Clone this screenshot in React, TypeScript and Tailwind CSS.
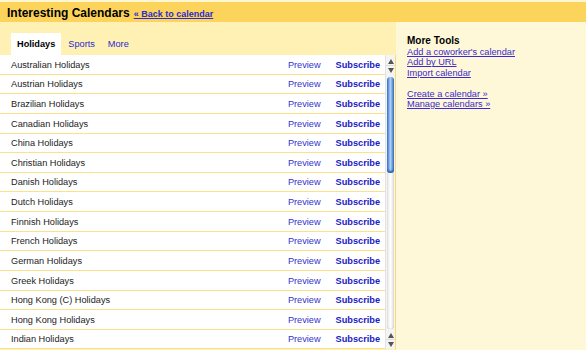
const calendars = [
  'Australian Holidays',
  'Austrian Holidays',
  'Brazilian Holidays',
  'Canadian Holidays',
  'China Holidays',
  'Christian Holidays',
  'Danish Holidays',
  'Dutch Holidays',
  'Finnish Holidays',
  'French Holidays',
  'German Holidays',
  'Greek Holidays',
  'Hong Kong (C) Holidays',
  'Hong Kong Holidays',
  'Indian Holidays',
]

// Mac-style arrow pair for the scrollbar ends
function ArrowPair() {
  return (
    <div className="flex flex-col items-center">
      <div className="h-[9px] w-full flex items-center justify-center border-b border-[#dddddd]">
        <svg width="6" height="5" viewBox="0 0 6 5">
          <path d="M3 0 L6 5 L0 5 Z" fill="#555555" />
        </svg>
      </div>
      <div className="h-[9px] w-full flex items-center justify-center">
        <svg width="6" height="5" viewBox="0 0 6 5">
          <path d="M0 0 L6 0 L3 5 Z" fill="#555555" />
        </svg>
      </div>
    </div>
  )
}

function ScrollBar() {
  return (
    <div className="w-[10px] flex flex-col bg-[#f4f4f4] border-l border-[#e2e2e2]">
      <div className="pt-[2px]">
        <ArrowPair />
      </div>
      <div className="flex-1 flex flex-col px-[1px] py-[2px]">
        <div className="flex-1 rounded-full bg-gradient-to-r from-[#e4e4e4] via-[#ffffff] to-[#dcdcdc] shadow-[inset_0_0_1px_#aaaaaa] flex flex-col">
          <div className="h-[96px] rounded-full bg-gradient-to-r from-[#3f78cc] via-[#a9d0f7] to-[#3a70c4] shadow-[inset_0_-2px_2px_#2a5eb0]" />
        </div>
      </div>
      <ArrowPair />
    </div>
  )
}

export default function App() {
  return (
    <div className="w-[586px] h-[361px] bg-white overflow-hidden font-['Liberation_Sans',Arial,sans-serif] text-[9.2px] leading-none text-[#222222]">
      <div className="h-[2px] bg-[#fff6d2]" />

      {/* Header */}
      <div className="h-[20px] bg-[#fcd45b] flex items-baseline pl-[7px] pt-[5px] gap-[4px]">
        <span className="text-[12px] font-bold text-black">Interesting Calendars</span>
        <a className="text-[9px] font-bold text-[#2a2ad0] underline">« Back to calendar</a>
      </div>

      <div className="flex h-[328px]">
        {/* Calendar list */}
        <div className="w-[396px] flex flex-col bg-[#fff1b4]">
          <div className="h-[33px] flex items-end pl-[11px] gap-[1px]">
            <div className="h-[22px] bg-white px-[6px] pt-[1px] flex items-center font-bold text-black">Holidays</div>
            <div className="h-[22px] px-[6px] pt-[1px] flex items-center text-[#2a2ad0]">Sports</div>
            <div className="h-[22px] px-[6px] pt-[1px] flex items-center text-[#2a2ad0]">More</div>
          </div>
          <div className="flex bg-white border-r border-[#fbd977]">
            <div className="flex-1">
              {calendars.map((name) => (
                <div key={name} className="h-[19.64px] flex items-center border-b border-[#fde189] pl-[11px] pr-[5px] pt-[2px]">
                  <span className="flex-1">{name}</span>
                  <span className="text-[#3333cc]">Preview</span>
                  <span className="ml-[15px] font-bold text-[#2020c4]">Subscribe</span>
                </div>
              ))}
            </div>
            <ScrollBar />
          </div>
        </div>

        {/* More tools */}
        <div className="flex-1 bg-[#fff8d8] pl-[11px] pt-[14px] flex flex-col">
          <div className="text-[10px] font-bold text-black mb-[1px]">More Tools</div>
          <div className="flex flex-col text-[#3a2ad0] leading-[10.4px]">
            <a className="underline">Add a coworker's calendar</a>
            <a className="underline">Add by URL</a>
            <a className="underline">Import calendar</a>
            <div className="h-[10.4px]" />
            <a className="underline">Create a calendar »</a>
            <a className="underline">Manage calendars »</a>
          </div>
        </div>
      </div>
    </div>
  )
}
